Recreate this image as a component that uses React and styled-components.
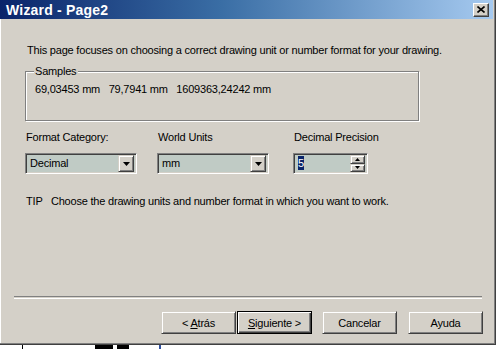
import React from "react";
import styled, { createGlobalStyle } from "styled-components";

const Global = createGlobalStyle`
  html, body { margin: 0; padding: 0; background: #ffffff; }
  body {
    font-family: "Liberation Sans", Arial, sans-serif;
    font-size: 11px;
    letter-spacing: -0.2px;
    color: #000;
  }
`;

const Screen = styled.div`
  width: 496px;
  height: 349px;
  display: flex;
  flex-direction: column;
  overflow: hidden;
  background: #ffffff;
`;

const Window = styled.div`
  height: 345px;
  flex: none;
  box-sizing: border-box;
  background: #d4d0c8;
  display: flex;
  flex-direction: column;
  border-right: 1px solid #404040;
  border-bottom: 1px solid #404040;
  box-shadow: inset -1px -1px 0 #808080, inset 1px 0 0 #ffffff;
`;

const TitleBar = styled.div`
  height: 19px;
  flex: none;
  margin-right: 2px;
  display: flex;
  align-items: center;
  justify-content: space-between;
  padding: 0 4px 0 6px;
  background: linear-gradient(to right, #0a246a 0%, #3a6ea5 45%, #a6caf0 100%);
`;

const Title = styled.span`
  color: #ffffff;
  font-weight: bold;
  font-size: 14px;
  letter-spacing: 0.2px;
`;

const CloseBtn = styled.div`
  width: 16px;
  height: 14px;
  box-sizing: border-box;
  background: #d4d0c8;
  border-top: 1px solid #ffffff;
  border-left: 1px solid #ffffff;
  border-right: 1px solid #404040;
  border-bottom: 1px solid #404040;
  box-shadow: inset -1px -1px 0 #808080;
  display: flex;
  align-items: center;
  justify-content: center;
`;

const Body = styled.div`
  flex: 1;
  display: flex;
  flex-direction: column;
  padding: 25px 0 10px 25px;
`;

const Text = styled.div`
  line-height: 13px;
  padding-left: ${(p) => p.$indent || 0}px;
  margin-top: ${(p) => p.$top || 0}px;
  white-space: pre;
`;

const Group = styled.div`
  position: relative;
  margin-top: 14px;
  width: 394px;
  height: 50px;
  box-sizing: border-box;
  border: 1px solid #808080;
  box-shadow: inset 1px 1px 0 #ffffff, 1px 1px 0 #ffffff;
  padding: 11px 0 0 9px;
`;

const Legend = styled.span`
  position: absolute;
  top: -7px;
  left: 8px;
  padding: 0 2px 0 1px;
  background: #d4d0c8;
  line-height: 13px;
`;

const Fields = styled.div`
  display: flex;
  margin-top: 10px;
`;

const Field = styled.div`
  display: flex;
  flex-direction: column;
  width: ${(p) => p.$w}px;
  margin-right: ${(p) => p.$gap || 0}px;
`;

const Label = styled.div`
  line-height: 13px;
  padding-left: 1px;
  margin-bottom: 9px;
  white-space: nowrap;
`;

const Sunken = styled.div`
  height: 21px;
  box-sizing: border-box;
  background: #c0cbc5;
  border-top: 1px solid #808080;
  border-left: 1px solid #808080;
  border-right: 1px solid #ffffff;
  border-bottom: 1px solid #ffffff;
  box-shadow: inset 1px 1px 0 #404040, inset -1px -1px 0 #d4d0c8;
  display: flex;
  align-items: center;
  padding: 2px;
`;

const Value = styled.div`
  flex: 1;
  padding-left: 2px;
  line-height: 13px;
`;

const Raised = styled.div`
  box-sizing: border-box;
  background: #d4d0c8;
  border-top: 1px solid #d4d0c8;
  border-left: 1px solid #d4d0c8;
  border-right: 1px solid #404040;
  border-bottom: 1px solid #404040;
  box-shadow: inset 1px 1px 0 #ffffff, inset -1px -1px 0 #808080;
  display: flex;
  align-items: center;
  justify-content: center;
`;

const DropBtn = styled(Raised)`
  width: 16px;
  height: 17px;
`;

const SpinCol = styled.div`
  display: flex;
  flex-direction: column;
  height: 17px;
`;

const SpinBtn = styled(Raised)`
  width: 15px;
  flex: 1;
`;

const Selected = styled.span`
  background: #0a246a;
  color: #ffffff;
  padding: 1px 0;
`;

const Spacer = styled.div`
  flex: 1;
`;

const Separator = styled.div`
  margin: 0 13px 0 -11px;
  height: 1px;
  border-top: 1px solid #808080;
  border-bottom: 1px solid #ffffff;
`;

const ButtonRow = styled.div`
  display: flex;
  justify-content: flex-end;
  margin-top: 12px;
  padding-right: 12px;
`;

const Button = styled.div`
  width: 75px;
  height: 23px;
  box-sizing: border-box;
  margin-left: ${(p) => p.$gap || 0}px;
  background: #d4d0c8;
  display: flex;
  align-items: center;
  justify-content: center;
  white-space: pre;
  border: 1px solid;
  border-color: ${(p) =>
    p.$default ? "#000000" : "#d4d0c8 #404040 #404040 #d4d0c8"};
  box-shadow: ${(p) =>
    p.$default
      ? "inset 1px 1px 0 #ffffff, inset -1px -1px 0 #404040, inset -2px -2px 0 #808080"
      : "inset 1px 1px 0 #ffffff, inset -1px -1px 0 #808080"};
`;

const Caption = styled.span`
  white-space: pre;
`;

const U = styled.span`
  text-decoration: underline;
`;

const Remnant = styled.div`
  flex: 1;
  display: flex;
  align-items: flex-start;
  padding-left: 22px;
`;

const Mark = styled.span`
  display: block;
  width: ${(p) => p.$w}px;
  height: 4px;
  margin-left: ${(p) => p.$x}px;
  background: ${(p) => p.$c || "#000"};
`;

const Arrow = () => (
  <svg width="7" height="4" viewBox="0 0 7 4">
    <path d="M0 0h7L3.5 4z" fill="#000" />
  </svg>
);

const SmallArrow = ({ up }) => (
  <svg width="5" height="3" viewBox="0 0 5 3">
    <path d={up ? "M2.5 0L5 3H0z" : "M0 0h5L2.5 3z"} fill="#000" />
  </svg>
);

const Combo = ({ value }) => (
  <Sunken>
    <Value>{value}</Value>
    <DropBtn>
      <Arrow />
    </DropBtn>
  </Sunken>
);

export default function App() {
  return (
    <>
      <Global />
      <Screen>
        <Window>
          <TitleBar>
            <Title>Wizard - Page2</Title>
            <CloseBtn>
              <svg width="8" height="7" viewBox="0 0 8 7">
                <path d="M0.5 0.5L7.5 6.5M7.5 0.5L0.5 6.5" stroke="#000" strokeWidth="1.6" />
              </svg>
            </CloseBtn>
          </TitleBar>
          <Body>
            <Text $indent={2}>
              This page focuses on choosing a correct drawing unit or number format for your drawing.
            </Text>
            <Group>
              <Legend>Samples</Legend>
              <Text>{"69,03453 mm   79,7941 mm   1609363,24242 mm"}</Text>
            </Group>
            <Fields>
              <Field $w={112} $gap={20}>
                <Label>Format Category:</Label>
                <Combo value="Decimal" />
              </Field>
              <Field $w={112} $gap={24}>
                <Label>World Units</Label>
                <Combo value="mm" />
              </Field>
              <Field $w={75}>
                <Label>Decimal Precision</Label>
                <Sunken>
                  <Value>
                    <Selected>5</Selected>
                  </Value>
                  <SpinCol>
                    <SpinBtn>
                      <SmallArrow up />
                    </SpinBtn>
                    <SpinBtn>
                      <SmallArrow />
                    </SpinBtn>
                  </SpinCol>
                </Sunken>
              </Field>
            </Fields>
            <Text $indent={1} $top={21}>
              {"TIP   Choose the drawing units and number format in which you want to work."}
            </Text>
            <Spacer />
            <Separator />
            <ButtonRow>
              <Button>
                <Caption>
                  {"< "}
                  <U>A</U>
                  {"trás"}
                </Caption>
              </Button>
              <Button $default $gap={1}>
                <Caption>
                  <U>S</U>
                  {"iguiente >"}
                </Caption>
              </Button>
              <Button $gap={10}>
                <Caption>Cancelar</Caption>
              </Button>
              <Button $gap={11}>
                <Caption>Ayuda</Caption>
              </Button>
            </ButtonRow>
          </Body>
        </Window>
        <Remnant>
          <Mark $w={1} $x={0} />
          <Mark $w={18} $x={72} />
          <Mark $w={12} $x={4} />
          <Mark $w={2} $x={30} $c="#3050a0" />
        </Remnant>
      </Screen>
    </>
  );
}
